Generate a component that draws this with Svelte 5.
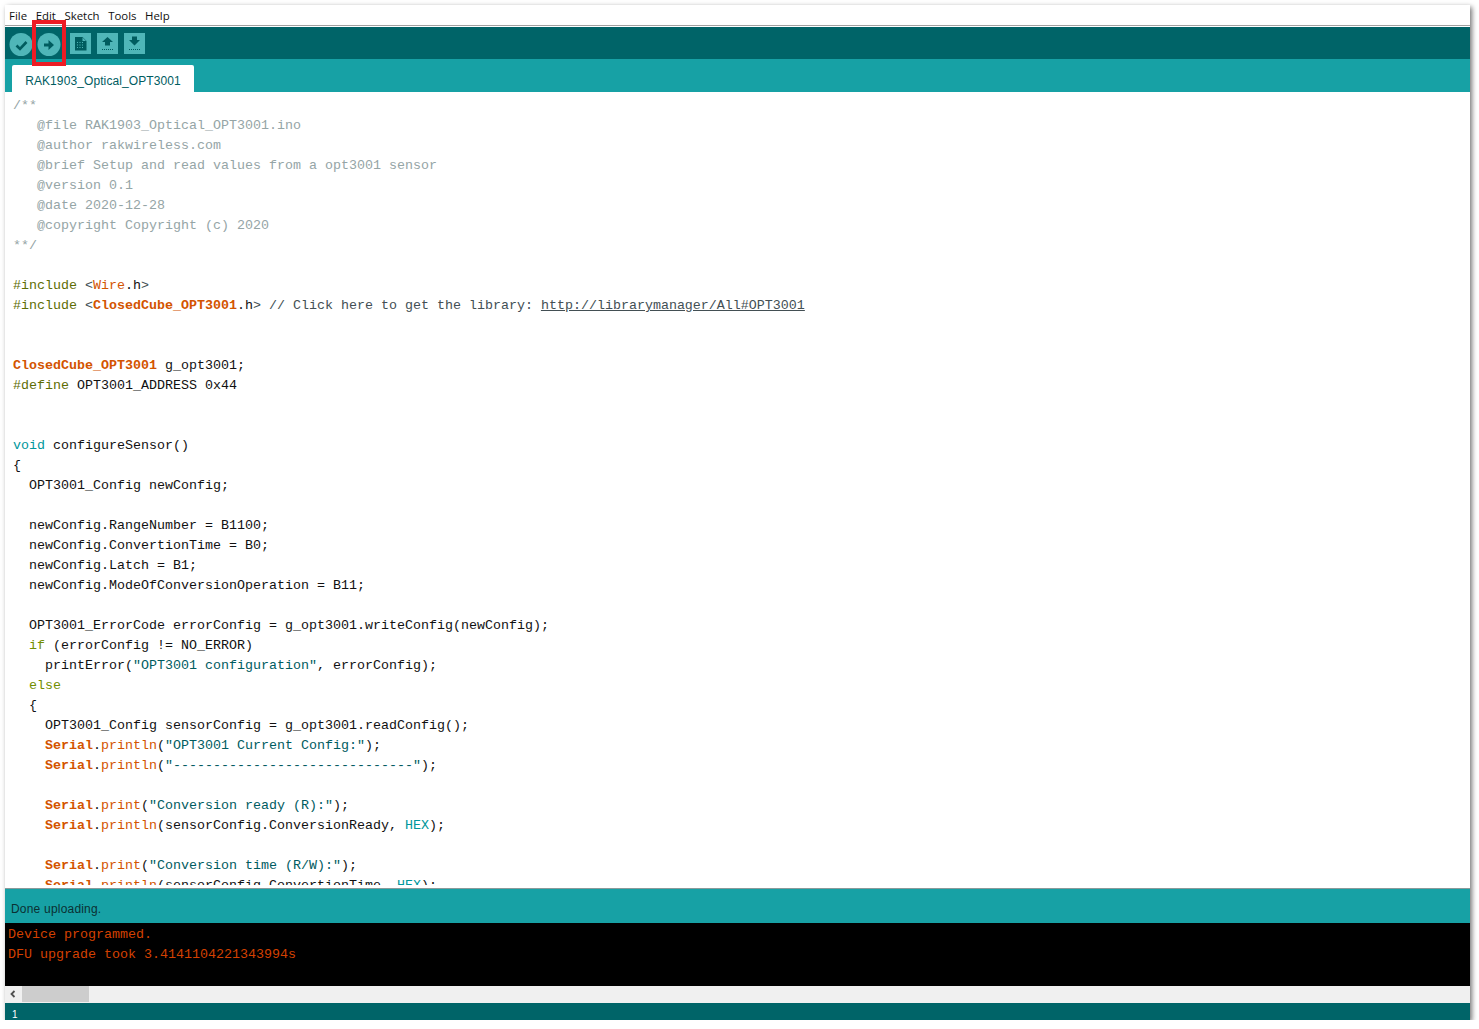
<script lang="ts">
  type Tok = [string, string]

  const p = (s: string): Tok => ['', s]
  const c = (s: string): Tok => ['cmt', s]
  const k = (s: string): Tok => ['kw', s]
  const f = (s: string): Tok => ['fn', s]
  const s = (t: string): Tok => ['str', t]
  const g = (t: string): Tok => ['pre', t]
  const o = (t: string): Tok => ['ctl', t]
  const t = (x: string): Tok => ['teal', x]
  const u = (x: string): Tok => ['url', x]
  const m = (x: string): Tok => ['note', x]

  const menus = ['File', 'Edit', 'Sketch', 'Tools', 'Help']

  const code: Tok[][] = [
    [c('/**')],
    [c('   @file RAK1903_Optical_OPT3001.ino')],
    [c('   @author rakwireless.com')],
    [c('   @brief Setup and read values from a opt3001 sensor')],
    [c('   @version 0.1')],
    [c('   @date 2020-12-28')],
    [c('   @copyright Copyright (c) 2020')],
    [c('**/')],
    [],
    [g('#include'), m(' <'), f('Wire'), p('.h'), m('>')],
    [g('#include'), m(' <'), k('ClosedCube_OPT3001'), p('.h'), m('> // Click here to get the library: '), u('http://librarymanager/All#OPT3001')],
    [],
    [],
    [k('ClosedCube_OPT3001'), p(' g_opt3001;')],
    [g('#define'), p(' OPT3001_ADDRESS 0x44')],
    [],
    [],
    [t('void'), p(' configureSensor()')],
    [p('{')],
    [p('  OPT3001_Config newConfig;')],
    [],
    [p('  newConfig.RangeNumber = B1100;')],
    [p('  newConfig.ConvertionTime = B0;')],
    [p('  newConfig.Latch = B1;')],
    [p('  newConfig.ModeOfConversionOperation = B11;')],
    [],
    [p('  OPT3001_ErrorCode errorConfig = g_opt3001.writeConfig(newConfig);')],
    [p('  '), o('if'), p(' (errorConfig != NO_ERROR)')],
    [p('    printError('), s('"OPT3001 configuration"'), p(', errorConfig);')],
    [p('  '), o('else')],
    [p('  {')],
    [p('    OPT3001_Config sensorConfig = g_opt3001.readConfig();')],
    [p('    '), k('Serial'), p('.'), f('println'), p('('), s('"OPT3001 Current Config:"'), p(');')],
    [p('    '), k('Serial'), p('.'), f('println'), p('('), s('"------------------------------"'), p(');')],
    [],
    [p('    '), k('Serial'), p('.'), f('print'), p('('), s('"Conversion ready (R):"'), p(');')],
    [p('    '), k('Serial'), p('.'), f('println'), p('(sensorConfig.ConversionReady, '), t('HEX'), p(');')],
    [],
    [p('    '), k('Serial'), p('.'), f('print'), p('('), s('"Conversion time (R/W):"'), p(');')],
    [p('    '), k('Serial'), p('.'), f('println'), p('(sensorConfig.ConvertionTime, '), t('HEX'), p(');')]
  ]

  const consoleLines = ['Device programmed.', 'DFU upgrade took 3.4141104221343994s']
</script>

<div class="window">
  <nav class="menubar">
    {#each menus as item}
      <span class="menu-item">{item}</span>
    {/each}
  </nav>

  <div class="toolbar">
    <svg class="tool" viewBox="0 0 24 24" width="24" height="24" aria-hidden="true">
      <circle cx="12" cy="12.500" r="11.500" fill="#4fb6b8" />
      <path d="M7.500 13.500l3.500 3.500 6.500-7" fill="none" stroke="#005c5f" stroke-width="2.600" />
    </svg>
    <svg class="tool" viewBox="0 0 24 24" width="24" height="24" aria-hidden="true">
      <circle cx="12" cy="12.500" r="11.500" fill="#4fb6b8" />
      <path d="M7 11.500h4.500v-3.500l5.500 5-5.500 5v-3.500h-4.500z" fill="#005c5f" />
    </svg>
    <div class="tool-group">
      <svg class="tool" viewBox="0 0 21 21" width="21" height="21" aria-hidden="true">
        <rect width="21" height="21" fill="#4fb6b8" />
        <path d="M5 4h7.500l4 4v9.500h-11.500z" fill="#005c5f" />
        <path d="M12.500 4.500v3.500h3.500" fill="#4fb6b8" />
        <path d="M7 9h1v1h-1zM9.500 9h1v1h-1zM12 9h1v1h-1zM7 11.500h1v1h-1zM9.500 11.500h1v1h-1zM12 11.500h1v1h-1zM7 14h1v1h-1zM9.500 14h1v1h-1zM12 14h1v1h-1z" fill="#4fb6b8" />
      </svg>
      <svg class="tool" viewBox="0 0 21 21" width="21" height="21" aria-hidden="true">
        <rect width="21" height="21" fill="#4fb6b8" />
        <path d="M10.500 4l5.500 5h-3v3.500h-5v-3.500h-3z" fill="#005c5f" />
        <path d="M5 16.500h11" stroke="#005c5f" stroke-width="1" stroke-dasharray="1 1" fill="none" />
      </svg>
      <svg class="tool" viewBox="0 0 21 21" width="21" height="21" aria-hidden="true">
        <rect width="21" height="21" fill="#4fb6b8" />
        <path d="M8 3.500h5v3.500h3l-5.500 5.500-5.500-5.500h3z" fill="#005c5f" />
        <path d="M5 16.500h11" stroke="#005c5f" stroke-width="1" stroke-dasharray="1 1" fill="none" />
      </svg>
    </div>
  </div>

  <div class="tabs">
    <div class="tab">RAK1903_Optical_OPT3001</div>
  </div>

  <pre class="editor">{#each code as line}<div class="line">{#each line as tok}<span class={tok[0]}>{tok[1]}</span>{/each}</div>{/each}</pre>

  <div class="status">Done uploading.</div>

  <pre class="console">{#each consoleLines as line}<div class="line">{line}</div>{/each}</pre>

  <div class="hscroll">
    <svg class="scroll-arrow" viewBox="0 0 8 8" width="8" height="8" aria-hidden="true">
      <path d="M5.500 1l-3 3 3 3" fill="none" stroke="#505050" stroke-width="1.800" />
    </svg>
    <div class="scroll-thumb"></div>
  </div>

  <div class="footer">1</div>

  <div class="highlight"></div>
</div>

<style>
  :global(body) {
    margin: 0;
    background: #fff;
  }

  .window {
    position: relative;
    width: 1465px;
    height: 1015px;
    margin: 5px 0 0 5px;
    display: flex;
    flex-direction: column;
    background: #fff;
    box-shadow: 2px 2px 5px rgba(0, 0, 0, 0.55);
    font-family: "Liberation Sans", Arial, sans-serif;
  }

  .menubar {
    height: 20px;
    flex: none;
    display: flex;
    align-items: center;
    gap: 8.600px;
    padding: 1px 0 0 4px;
    box-sizing: border-box;
    font-family: "Open Sans", "Noto Sans", sans-serif;
    font-size: 11.400px;
    color: #111;
  }

  .toolbar {
    height: 34px;
    flex: none;
    box-sizing: border-box;
    display: flex;
    align-items: center;
    gap: 4px;
    padding: 2px 0 0 4px;
    background: #006468;
    border-top: 1px solid #a0a0a0;
    box-shadow: inset 0 1px 0 #fff;
  }

  .tool { display: block; }

  .tool-group {
    display: flex;
    gap: 6px;
    margin-left: 5px;
  }

  .tabs {
    height: 33px;
    flex: none;
    box-sizing: border-box;
    padding: 6px 0 0 7px;
    background: #17a1a5;
  }

  .tab {
    width: 182px;
    height: 27px;
    box-sizing: border-box;
    padding-top: 9px;
    text-align: center;
    background: #fff;
    border-radius: 2px 2px 0 0;
    color: #005c5f;
    font-size: 12px;
    letter-spacing: 0.1px;
    line-height: 14px;
  }

  .editor {
    height: 796px;
    flex: none;
    margin: 0;
    padding: 4px 0 0 8px;
    box-sizing: border-box;
    border-bottom: 3px solid #fff;
    overflow: hidden;
    background: #fff;
    color: #111;
    font-family: "Liberation Mono", "Courier New", monospace;
    font-size: 13.330px;
    line-height: 20px;
  }

  .line { height: 20px; white-space: pre; }

  .cmt { color: #95a5a6; }
  .note { color: #434f54; }
  .kw { color: #d35400; font-weight: 700; }
  .fn { color: #d35400; }
  .str { color: #005c5f; }
  .pre { color: #5e6d03; }
  .ctl { color: #728e00; }
  .teal { color: #00979c; }
  .url { color: #434f54; text-decoration: underline; }

  .status {
    height: 35px;
    flex: none;
    box-sizing: border-box;
    padding: 13px 0 0 6px;
    background: #17a1a5;
    border-top: 1px solid #8a9a9a;
    color: #0b3033;
    font-size: 12px;
    letter-spacing: 0.2px;
    line-height: 14px;
  }

  .console {
    height: 63px;
    flex: none;
    margin: 0;
    padding: 2px 0 0 3px;
    box-sizing: border-box;
    overflow: hidden;
    background: #000;
    color: #d44000;
    font-family: "Liberation Mono", "Courier New", monospace;
    font-size: 13.330px;
    line-height: 20px;
  }

  .hscroll {
    height: 17px;
    flex: none;
    display: flex;
    align-items: stretch;
    background: #f0f0f0;
  }

  .scroll-arrow {
    flex: none;
    width: 8px;
    margin: 4px 5px 0 4px;
  }

  .scroll-thumb {
    width: 67px;
    margin-bottom: 1px;
    background: #cdcdcd;
  }

  .footer {
    height: 17px;
    flex: none;
    box-sizing: border-box;
    padding: 6px 0 0 7px;
    background: #006468;
    color: #fff;
    font-size: 10px;
    line-height: 12px;
  }

  .highlight {
    position: absolute;
    left: 27px;
    top: 15px;
    width: 34px;
    height: 46px;
    box-sizing: border-box;
    border: 4px solid #ed1c24;
  }
</style>
